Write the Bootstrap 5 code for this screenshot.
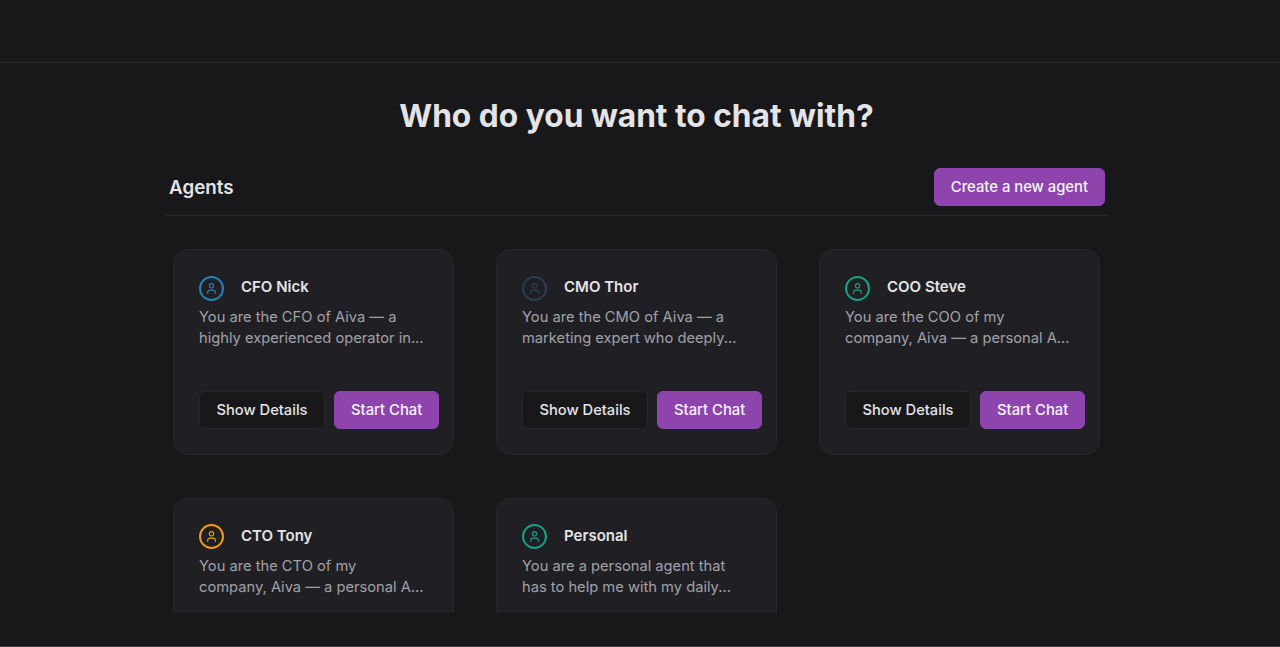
<!DOCTYPE html>
<html lang="en"><head><meta charset="utf-8"><title>Agents</title>
<link href="https://cdn.jsdelivr.net/npm/bootstrap@5.3.0/dist/css/bootstrap.min.css" rel="stylesheet">
<style>
html,body{height:647px;overflow:hidden}
body{background:#18181b;font-family:Inter,"Liberation Sans",sans-serif;color:#e4e4e7}
.topbar{height:63px;border-bottom:1px solid #27272a}
.scroller{height:550px;overflow:hidden}
.bottomarea{height:34px;border-bottom:1px solid #3f3f46}
.inner{width:943px;margin-left:165px}
.headline{font-size:31.7px;line-height:36px;font-weight:700;color:#e4e4e7;text-align:center;margin:35px 0 34px}
.sectionbar{height:48px;padding:0 3px 9px 4px;border-bottom:1px solid #27272a}
.sectiontitle{font-size:18.8px;line-height:28px;font-weight:600;color:#e4e4e7;margin:2px 0 0}
.btn-violet{background:#8e44ad;border:1px solid #8e44ad;color:#f4f4f5;font-size:14.8px;font-weight:500;border-radius:6px;height:38px;padding:0 16px;line-height:36px;white-space:nowrap}
.btn-violet:hover{background:#8e44ad;color:#fff}
.btn-dim{background:#18181b;border:1px solid #27272a;color:#e4e4e7;font-size:14.7px;font-weight:500;border-radius:6px;height:38px;padding:0 16.5px;line-height:36px;white-space:nowrap}
.btn-dim:hover{background:#18181b;color:#e4e4e7;border-color:#27272a}
.agentgrid{display:grid;grid-template-columns:repeat(3,281px);column-gap:42px;row-gap:42.6px;padding:33px 0 0 8px}
.agentcard{height:206px;background:#202024;border:1px solid #27272a;border-radius:14px;padding:25px 14px 25px 25px;display:flex;flex-direction:column}
.agenthead{height:26px;gap:16px;margin-bottom:6px}
.avatar{width:25px;height:25px;margin-right:1px;flex:none;border-radius:50%;border:2px solid currentColor;display:flex;align-items:center;justify-content:center}
.c-blue{color:#2980b9}.c-slate{color:#2c3e50}.c-green{color:#16a085}.c-orange{color:#f39c12}
.agentname{font-size:15px;line-height:20px;font-weight:600;color:#e4e4e7;padding-bottom:2px}
.agentdesc{font-size:14.7px;line-height:21px;color:#a1a1aa;margin:0;width:228px;height:42px}
.agentactions{margin-top:auto;gap:9px}
</style></head>
<body>
<div class="topbar"></div>
<main class="scroller">
 <div class="inner">
  <h1 class="headline">Who do you want to chat with?</h1>
  <div class="sectionbar d-flex justify-content-between align-items-center">
   <h2 class="sectiontitle">Agents</h2>
   <button class="btn btn-violet">Create a new agent</button>
  </div>
  <div class="agentgrid">
   <div class="agentcard">
    <div class="agenthead d-flex align-items-center"><span class="avatar c-blue"><svg width="13" height="13" viewBox="0 0 24 24" fill="none" stroke="currentColor" stroke-width="2" stroke-linecap="round" stroke-linejoin="round"><path d="M19 21v-2a4 4 0 0 0-4-4H9a4 4 0 0 0-4 4v2"/><circle cx="12" cy="7" r="4"/></svg></span><span class="agentname">CFO Nick</span></div>
    <p class="agentdesc">You are the CFO of Aiva — a highly experienced operator in...</p>
    <div class="agentactions d-flex"><button class="btn btn-dim">Show Details</button><button class="btn btn-violet">Start Chat</button></div>
   </div>
   <div class="agentcard">
    <div class="agenthead d-flex align-items-center"><span class="avatar c-slate"><svg width="13" height="13" viewBox="0 0 24 24" fill="none" stroke="currentColor" stroke-width="2" stroke-linecap="round" stroke-linejoin="round"><path d="M19 21v-2a4 4 0 0 0-4-4H9a4 4 0 0 0-4 4v2"/><circle cx="12" cy="7" r="4"/></svg></span><span class="agentname">CMO Thor</span></div>
    <p class="agentdesc">You are the CMO of Aiva — a marketing expert who deeply...</p>
    <div class="agentactions d-flex"><button class="btn btn-dim">Show Details</button><button class="btn btn-violet">Start Chat</button></div>
   </div>
   <div class="agentcard">
    <div class="agenthead d-flex align-items-center"><span class="avatar c-green"><svg width="13" height="13" viewBox="0 0 24 24" fill="none" stroke="currentColor" stroke-width="2" stroke-linecap="round" stroke-linejoin="round"><path d="M19 21v-2a4 4 0 0 0-4-4H9a4 4 0 0 0-4 4v2"/><circle cx="12" cy="7" r="4"/></svg></span><span class="agentname">COO Steve</span></div>
    <p class="agentdesc">You are the COO of my company, Aiva — a personal A...</p>
    <div class="agentactions d-flex"><button class="btn btn-dim">Show Details</button><button class="btn btn-violet">Start Chat</button></div>
   </div>
   <div class="agentcard">
    <div class="agenthead d-flex align-items-center"><span class="avatar c-orange"><svg width="13" height="13" viewBox="0 0 24 24" fill="none" stroke="currentColor" stroke-width="2" stroke-linecap="round" stroke-linejoin="round"><path d="M19 21v-2a4 4 0 0 0-4-4H9a4 4 0 0 0-4 4v2"/><circle cx="12" cy="7" r="4"/></svg></span><span class="agentname">CTO Tony</span></div>
    <p class="agentdesc">You are the CTO of my company, Aiva — a personal A...</p>
   </div>
   <div class="agentcard">
    <div class="agenthead d-flex align-items-center"><span class="avatar c-green"><svg width="13" height="13" viewBox="0 0 24 24" fill="none" stroke="currentColor" stroke-width="2" stroke-linecap="round" stroke-linejoin="round"><path d="M19 21v-2a4 4 0 0 0-4-4H9a4 4 0 0 0-4 4v2"/><circle cx="12" cy="7" r="4"/></svg></span><span class="agentname">Personal</span></div>
    <p class="agentdesc">You are a personal agent that has to help me with my daily...</p>
   </div>
  </div>
 </div>
</main>
<div class="bottomarea"></div>
<script src="https://cdn.jsdelivr.net/npm/bootstrap@5.3.0/dist/js/bootstrap.bundle.min.js"></script>
</body></html>
